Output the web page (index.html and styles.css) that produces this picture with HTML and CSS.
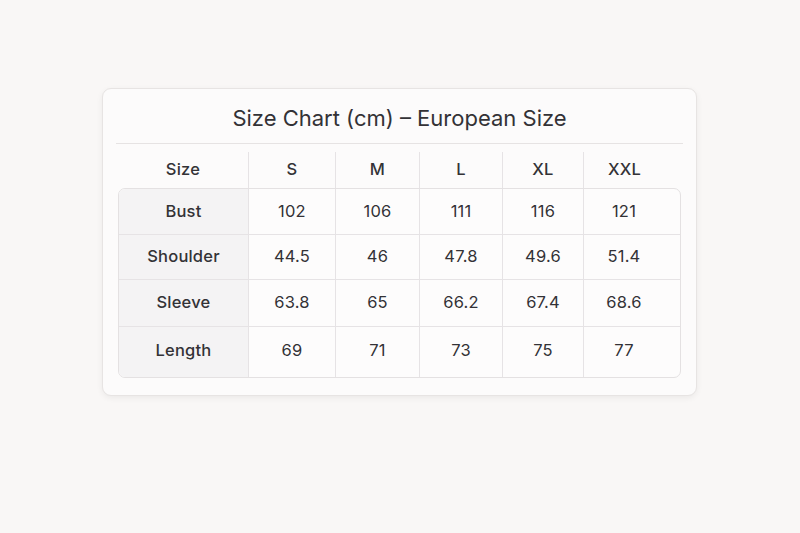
FILE: index.html
```html
<!DOCTYPE html>
<html lang="en">
<head>
<meta charset="utf-8">
<title>Size Chart</title>
<link rel="stylesheet" href="styles.css">
</head>
<body>
<div class="card">
  <h1 class="title">Size Chart (cm) – European Size</h1>
  <div class="head">
    <div class="hc first">Size</div>
    <div class="hc">S</div>
    <div class="hc">M</div>
    <div class="hc">L</div>
    <div class="hc">XL</div>
    <div class="hc last">XXL</div>
  </div>
  <div class="body">
    <div class="row">
      <div class="c label">Bust</div><div class="c">102</div><div class="c">106</div><div class="c">111</div><div class="c">116</div><div class="c last">121</div>
    </div>
    <div class="row">
      <div class="c label">Shoulder</div><div class="c">44.5</div><div class="c">46</div><div class="c">47.8</div><div class="c">49.6</div><div class="c last">51.4</div>
    </div>
    <div class="row tall">
      <div class="c label">Sleeve</div><div class="c">63.8</div><div class="c">65</div><div class="c">66.2</div><div class="c">67.4</div><div class="c last">68.6</div>
    </div>
    <div class="row taller">
      <div class="c label">Length</div><div class="c">69</div><div class="c">71</div><div class="c">73</div><div class="c">75</div><div class="c last">77</div>
    </div>
  </div>
</div>
</body>
</html>
```
FILE: styles.css
```css
* { box-sizing: border-box; }
html, body { margin: 0; padding: 0; }
body {
  background: #f9f7f6;
  font-family: Inter, "Noto Sans", sans-serif;
  color: #333236;
  width: 800px;
  height: 533px;
  padding-top: 88px;
}
.card {
  width: 595px;
  margin: 0 0 0 102px;
  background: #fcfbfb;
  border: 1px solid #e7e4e3;
  border-radius: 9px;
  box-shadow: 0 2px 6px rgba(0,0,0,0.06);
  padding: 0 13px 17px;
}
.title {
  margin: 0;
  font-size: 22px;
  font-weight: 400;
  text-align: center;
  height: 55px;
  line-height: 58px;
  border-bottom: 1px solid #e6e3e3;
  color: #333236;
}
.head {
  display: grid;
  grid-template-columns: 130px 87px 84px 83px 81px 100px;
  margin: 0 2px;
  padding-top: 8px;
}
.hc {
  height: 36px;
  padding-bottom: 3px;
  display: flex;
  align-items: center;
  justify-content: center;
  font-size: 16.5px;
  font-weight: 500;
  letter-spacing: 0.2px;
  border-left: 1px solid #e6e3e5;
  color: #333236;
}
.hc.first { border-left: none; }
.hc.last, .c.last { padding-right: 18px; }
.body {
  margin: 0 2px;
  border: 1px solid #e4e1e2;
  border-radius: 7px;
  overflow: hidden;
  background: #fdfcfc;
}
.row {
  display: grid;
  grid-template-columns: 129px 87px 84px 83px 81px 99px;
  height: 45px;
  border-top: 1px solid #e6e3e5;
}
.row:first-child { border-top: none; }
.row.tall { height: 47px; }
.row.taller { height: 51px; }
.c {
  display: flex;
  align-items: center;
  justify-content: center;
  padding-bottom: 2px;
  font-size: 16.5px;
  letter-spacing: 0.2px;
  border-left: 1px solid #e6e3e5;
}
.row.taller .c { padding-bottom: 5px; }
.c.label {
  border-left: none;
  background: #f4f3f4;
  font-weight: 500;
}
```
